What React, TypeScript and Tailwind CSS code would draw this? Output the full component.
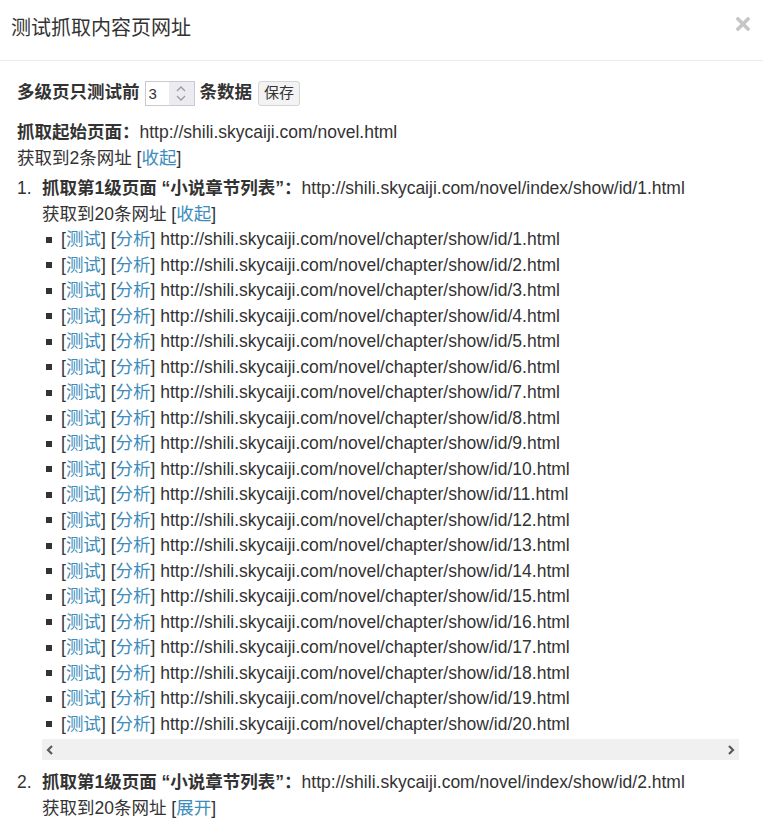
import React from 'react';

const Link: React.FC<{ children: React.ReactNode }> = ({ children }) => (
    <span>[<a className="text-[#3c8dbc]">{children}</a>]</span>
);

const ids = Array.from({ length: 20 }, (_, i) => i + 1);

const App: React.FC = () => {
    return (
        <div className="w-[763px] h-[823px] bg-white overflow-hidden text-[#333] text-[17.5px] leading-[25.5px] [font-family:'Liberation_Sans','Noto_Sans_CJK_SC',sans-serif]">
            <header className="h-[61px] border-b border-[#ececec] flex items-center justify-between pl-[11px] pr-[13px]">
                <h1 className="text-[20px] text-[#333] mb-[2px]">测试抓取内容页网址</h1>
                <svg width="14" height="14" viewBox="0 0 14 14" className="mb-[12px]">
                    <path d="M2 2 L12 12 M12 2 L2 12" stroke="#c6c6c6" strokeWidth="3.6" strokeLinecap="square" />
                </svg>
            </header>
            <main className="pl-[17px] pr-[24px] pt-[19px]">
                <div className="flex items-center h-[26px] font-bold">
                    <span>多级页只测试前</span>
                    <div className="ml-[5px] mr-[5px] w-[50px] h-[25px] border border-[#c9c9d2] flex items-stretch font-normal bg-white">
                        <span className="flex-1 pl-[3px] text-[15px] leading-[23px]">3</span>
                        <div className="w-[25px] bg-[#ebebf0] flex flex-col items-center justify-center gap-[3px]">
                            <svg width="10" height="6" viewBox="0 0 10 6"><path d="M1 5 L5 1 L9 5" stroke="#9a9aa6" strokeWidth="1.3" fill="none" /></svg>
                            <svg width="10" height="6" viewBox="0 0 10 6"><path d="M1 1 L5 5 L9 1" stroke="#9a9aa6" strokeWidth="1.3" fill="none" /></svg>
                        </div>
                    </div>
                    <span>条数据</span>
                    <button className="ml-[6px] h-[25px] px-[5px] border border-[#d4d4d4] rounded-[3px] bg-[#f3f3f3] text-[15px] font-normal leading-[22px]">保存</button>
                </div>
                <div className="mt-[14px]">
                    <div><b>抓取起始页面：</b>http://shili.skycaiji.com/novel.html</div>
                    <div>获取到2条网址 <Link>收起</Link></div>
                </div>
                <ol className="mt-[5px]">
                    <li className="flex">
                        <span className="w-[25px] shrink-0">1.</span>
                        <div className="flex-1 min-w-0">
                            <div><b>抓取第1级页面 “小说章节列表”：</b>http://shili.skycaiji.com/novel/index/show/id/1.html</div>
                            <div>获取到20条网址 <Link>收起</Link></div>
                            <ul>
                                {ids.map((id) => (
                                    <li key={id} className="flex items-center">
                                        <span className="w-[6px] h-[6px] bg-[#333] ml-[4px] mr-[9px] shrink-0" />
                                        <span className="whitespace-nowrap">
                                            <Link>测试</Link> <Link>分析</Link> http://shili.skycaiji.com/novel/chapter/show/id/{id}.html
                                        </span>
                                    </li>
                                ))}
                            </ul>
                            <div className="mt-[2px] h-[21px] bg-[#f0f0f0] flex items-center justify-between px-[3px]">
                                <svg width="10" height="12" viewBox="0 0 10 12"><path d="M7 2 L3 6 L7 10" stroke="#5a5a5a" strokeWidth="2.2" fill="none" /></svg>
                                <svg width="10" height="12" viewBox="0 0 10 12"><path d="M3 2 L7 6 L3 10" stroke="#5a5a5a" strokeWidth="2.2" fill="none" /></svg>
                            </div>
                        </div>
                    </li>
                    <li className="flex mt-[10px]">
                        <span className="w-[25px] shrink-0">2.</span>
                        <div className="flex-1 min-w-0">
                            <div><b>抓取第1级页面 “小说章节列表”：</b>http://shili.skycaiji.com/novel/index/show/id/2.html</div>
                            <div>获取到20条网址 <Link>展开</Link></div>
                        </div>
                    </li>
                </ol>
            </main>
        </div>
    );
};

export default App;
